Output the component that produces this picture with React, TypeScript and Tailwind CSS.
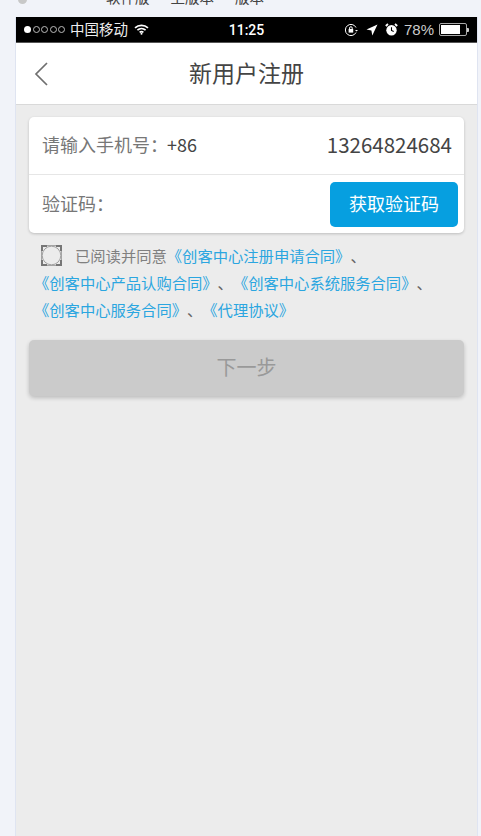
const F = '"Noto Sans CJK SC","Liberation Sans",sans-serif';
const font = { fontFamily: F };

function Wifi() {
  return (
    <svg width="15" height="11" viewBox="0 0 15 11" className="ml-[6px]" fill="none" stroke="#fff" strokeWidth="1.7">
      <path d="M1 3.8C4.6.6 10.4.6 14 3.8" />
      <path d="M3.4 6.2c2.3-2 5.9-2 8.2 0" />
      <path d="M5.6 8.3c1.1-.9 2.7-.9 3.8 0" />
      <circle cx="7.5" cy="9.8" r="1" fill="#fff" stroke="none" />
    </svg>
  );
}

function StatusBar() {
  return (
    <div className="flex h-[26px] items-center justify-between border-b border-[#555] bg-black text-white">
      <div className="flex w-[170px] items-center pl-[8px]">
        <div className="flex items-center gap-[1.5px]">
          <span className="h-[7px] w-[7px] rounded-full bg-white" />
          {[0, 1, 2, 3].map((i) => (
            <span key={i} className="h-[7px] w-[7px] rounded-full border border-[#bbb]" />
          ))}
        </div>
        <span className="ml-[5px] pb-[1px] text-[14.5px] leading-none text-[#eee]">中国移动</span>
        <Wifi />
      </div>
      <span className="text-[14px] font-medium leading-none" style={{ fontFamily: 'Roboto,sans-serif' }}>11:25</span>
      <div className="flex w-[170px] items-center justify-end pr-[8px]">
        <svg width="14" height="14" viewBox="0 0 14 14" fill="none" stroke="#fff" strokeWidth="1">
          <path d="M12 9.5A5.6 5.6 0 1 1 12 4.5" />
          <rect x="4.6" y="6" width="4.6" height="3.6" fill="#fff" stroke="none" />
          <path d="M5.6 6V5a1.3 1.3 0 0 1 2.6 0v1" />
          <path d="M11 7h3l-1.5 1.6z" fill="#fff" stroke="none" />
        </svg>
        <svg width="12" height="12" viewBox="0 0 12 12" className="ml-[8px]">
          <path d="M11.5.5 6.3 11.5 5.4 6.6.5 5.6z" fill="#fff" />
        </svg>
        <svg width="13" height="13" viewBox="0 0 13 13" className="ml-[7px]" fill="none">
          <circle cx="6.5" cy="7.2" r="5.2" fill="#fff" />
          <path d="M6.5 4.2v3.2l2.2 1" stroke="#000" strokeWidth="1.1" />
          <path d="M.8 3 3 1M12.2 3 10 1" stroke="#fff" strokeWidth="1.8" />
        </svg>
        <span className="ml-[6px] text-[15px] leading-none text-[#ccc]" style={{ fontFamily: '"Liberation Sans",sans-serif' }}>78%</span>
        <div className="ml-[5px] flex items-center">
          <div className="h-[13px] w-[28px] rounded-[2px] border border-[#aaa] p-[1px]">
            <div className="h-full w-[78%] bg-white" />
          </div>
          <div className="h-[4px] w-[2px] rounded-r-[1px] bg-[#ccc]" />
        </div>
      </div>
    </div>
  );
}

function Agreement() {
  const L = ({ children }: { children: string }) => <span className="text-[#2ba6e0]">{children}</span>;
  const Sep = () => <span className="text-[#666]">、</span>;
  return (
    <div className="mx-[13px] mt-[10px] text-[15.3px] text-[#808080] [text-spacing-trim:space-all]">
      <div className="flex h-[25px] items-center whitespace-nowrap pl-[12px]">
        <svg width="21" height="21" viewBox="0 0 21 21" className="mr-[13px] shrink-0" fill="none">
          <rect x="0.5" y="0.5" width="20" height="20" stroke="#a5a5a5" />
          <circle cx="10.5" cy="10.5" r="9.3" fill="#ececec" stroke="#a0a0a0" />
          <path d="M1 6V1h5M15 1h5v5M20 15v5h-5M6 20H1v-5" stroke="#767676" strokeWidth="2" />
        </svg>
        <span>已阅读并同意</span>
        <L>《创客中心注册申请合同》</L>
        <Sep />
      </div>
      <div className="mt-[1px] whitespace-nowrap pl-[5px] leading-[27px]">
        <L>《创客中心产品认购合同》</L>
        <Sep />
        <L>《创客中心系统服务合同》</L>
        <Sep />
      </div>
      <div className="whitespace-nowrap pl-[5px] leading-[26px]">
        <L>《创客中心服务合同》</L>
        <Sep />
        <L>《代理协议》</L>
      </div>
    </div>
  );
}

export default function App() {
  return (
    <div className="h-[836px] w-[481px] overflow-hidden bg-[#f1f3f9]" style={font}>
      <div className="flex h-[17px] items-start overflow-hidden">
        <span className="ml-[18px] mt-[-5px] h-[9px] w-[9px] shrink-0 rounded-full bg-[#c8c8c8]" />
        <div className="ml-[79px] mt-[-11px] flex gap-[21px] whitespace-nowrap text-[14.5px] leading-[15px] text-[#444]">
          <span>软件版</span>
          <span>上版本</span>
          <span>版本</span>
        </div>
      </div>
      <div className="ml-[16px] flex h-[819px] w-[461px] flex-col bg-[#ececec] shadow-[-1px_0_0_#dfe4f1,1px_0_0_#dfe4f1]">
        <StatusBar />
        <div className="flex h-[62px] items-center border-b border-[#d9d9d9] bg-white">
          <svg width="16" height="26" viewBox="0 0 16 26" className="ml-[17px]" fill="none" stroke="#6f6f6f" strokeWidth="1.7">
            <path d="M14 2 3 13l11 11" />
          </svg>
          <span className="ml-[140px] pb-[3px] text-[23px] leading-none text-[#444]">新用户注册</span>
        </div>
        <div className="mx-[13px] mt-[12px] rounded-[5px] bg-white shadow-[0_1px_3px_rgba(0,0,0,0.2)]">
          <div className="flex h-[58px] items-center justify-between border-b border-[#e6e6e6] pl-[13px] pr-[12px]">
            <span className="flex pb-[3px] text-[18px] leading-none text-[#777] [text-spacing-trim:space-all]">
              <span>请输入手机号：</span>
              <span className="ml-[-1px] text-[#444]">+86</span>
            </span>
            <span className="pb-[3px] text-[20.5px] leading-none text-[#444]">13264824684</span>
          </div>
          <div className="flex h-[58px] items-center justify-between pl-[13px] pr-[6px]">
            <span className="pb-[2px] text-[18px] leading-none text-[#777] [text-spacing-trim:space-all]">验证码：</span>
            <button className="flex h-[45px] w-[128px] items-center justify-center rounded-[5px] bg-[#069fe0] pb-[2px] text-[18px] leading-none text-white">
              获取验证码
            </button>
          </div>
        </div>
        <Agreement />
        <button className="mx-[13px] mt-[18px] flex h-[56px] items-center justify-center rounded-[5px] bg-[#cbcbcb] pb-[2px] text-[20px] leading-none text-[#999] shadow-[0_2px_4px_rgba(0,0,0,0.2)]">
          下一步
        </button>
      </div>
    </div>
  );
}
